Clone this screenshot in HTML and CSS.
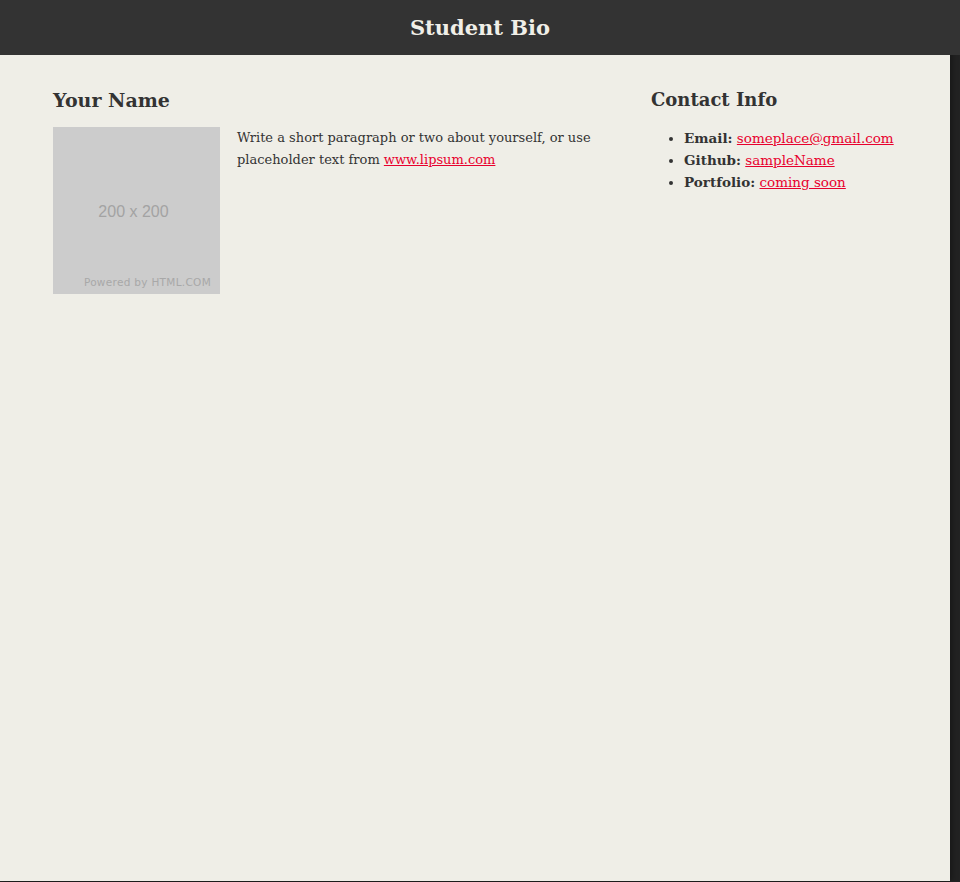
FILE: index.html
```html
<!DOCTYPE html>
<html>
<head>
<meta charset="utf-8">
<title>Student Bio</title>
<link rel="stylesheet" href="styles.css">
</head>
<body>
<div class="page">
  <header class="topbar"><h1>Student Bio</h1></header>
  <main class="content">
    <section class="bio">
      <h2>Your Name</h2>
      <div class="bio-body">
        <div class="placeholder">
          <span class="ph-size">200 x 200</span>
          <span class="ph-credit">Powered by HTML.COM</span>
        </div>
        <p>Write a short paragraph or two about yourself, or use placeholder text from <a href="#">www.lipsum.com</a></p>
      </div>
    </section>
    <aside class="contact">
      <h2>Contact Info</h2>
      <ul>
        <li><b>Email:</b> <a href="#">someplace@gmail.com</a></li>
        <li><b>Github:</b> <a href="#">sampleName</a></li>
        <li><b>Portfolio:</b> <a href="#">coming soon</a></li>
      </ul>
    </aside>
  </main>
</div>
</body>
</html>
```
FILE: styles.css
```css
html, body { margin: 0; padding: 0; }
body {
  background: #222;
  font-family: "DejaVu Serif", Georgia, serif;
  color: #333;
  height: 882px;
  overflow: hidden;
}
.page {
  width: 950px;
  height: 881px;
  background: #efeee7;
  box-shadow: 2px 0 6px rgba(0,0,0,0.35);
  display: flex;
  flex-direction: column;
}
.topbar {
  background: #333;
  height: 55px;
  width: 960px;
  display: flex;
  align-items: center;
  justify-content: center;
}
.topbar h1 {
  margin: 0;
  color: #f0efe8;
  font-size: 21px;
  font-weight: bold;
}
.content {
  display: flex;
  padding: 33px 0 0 53px;
}
.bio { width: 598px; }
.contact { flex: 1; }
h2 {
  margin: 0 0 15px;
  font-size: 18px;
  font-weight: bold;
  line-height: 24px;
}
.bio h2 { font-size: 19px; }
.bio-body { display: flex; gap: 17px; align-items: flex-start; }
.placeholder {
  width: 167px;
  height: 167px;
  flex: none;
  background: #cccccc;
  position: relative;
  font-family: "Liberation Sans", Arial, sans-serif;
}
.ph-size {
  position: absolute;
  left: 0; right: 0; top: 76px;
  text-align: center;
  color: #a3a3a3;
  font-size: 16px;
  padding-right: 6px;
}
.ph-credit {
  position: absolute;
  right: 9px; bottom: 6px;
  color: #a8a8a8;
  font-size: 10.5px;
  font-family: "DejaVu Sans", sans-serif;
  letter-spacing: 0.3px;
}
.bio-body p {
  margin: 0;
  font-size: 13px;
  line-height: 22px;
  max-width: 362px;
}
a { color: #e8002d; }
ul {
  margin: 0;
  padding-left: 33px;
  font-size: 13.5px;
  line-height: 22px;
}
```
